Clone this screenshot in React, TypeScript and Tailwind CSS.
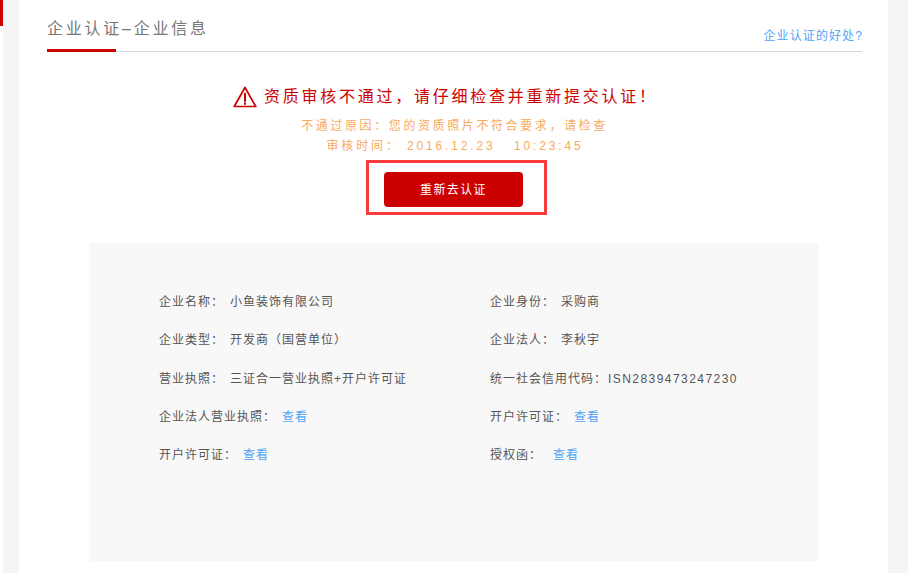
const rows = [
  [
    { label: '企业名称：', value: '小鱼装饰有限公司', gap: 'ml-[6px]' },
    { label: '企业身份：', value: '采购商', gap: 'ml-[6px]' },
  ],
  [
    { label: '企业类型：', value: '开发商（国营单位）', gap: 'ml-[6px]' },
    { label: '企业法人：', value: '李秋宇', gap: 'ml-[6px]' },
  ],
  [
    { label: '营业执照：', value: '三证合一营业执照+开户许可证', gap: 'ml-[6px]' },
    { label: '统一社会信用代码：', value: 'ISN2839473247230', gap: 'ml-[1px] tracking-[1.45px]' },
  ],
  [
    { label: '企业法人营业执照：', link: '查看', gap: 'ml-[6px]' },
    { label: '开户许可证：', link: '查看', gap: 'ml-[6px]' },
  ],
  [
    { label: '开户许可证：', link: '查看', gap: 'ml-[6px]' },
    { label: '授权函：', link: '查看', gap: 'ml-[11px]' },
  ],
]

function WarnIcon() {
  return (
    <svg className="w-[24px] h-[22px] shrink-0" viewBox="0 0 24 22" fill="none" stroke="#cc0000" strokeWidth="1.7" strokeLinejoin="round" strokeLinecap="round">
      <path d="M12 1.5L1.2 20.5h21.6L12 1.5z" />
      <path d="M12 7.5v7.5" strokeWidth="2" />
      <path d="M12 17.3v.6" strokeWidth="2" />
    </svg>
  )
}

export default function App() {
  return (
    <div className="h-[573px] overflow-hidden bg-[#f5f5f5] flex font-['Liberation_Sans','Noto_Sans_CJK_SC',sans-serif]">
      <div className="w-[3px] bg-white">
        <div className="h-[26px] bg-[#cc0000]" />
      </div>
      <div className="ml-[16px] w-[869px] bg-white">
        <div className="ml-[28px] mr-[26px] pt-[18px] relative border-b border-[#d8d8d8] h-[52px] flex justify-between items-start">
          <span className="text-[16px] leading-[22px] tracking-[2.75px] text-[#777]">企业认证–企业信息</span>
          <a className="mt-[10px] mr-[-1px] text-[12px] leading-[16px] tracking-[1.1px] text-[#4fa5f5]">企业认证的好处?</a>
          <div className="absolute left-0 bottom-[-1px] w-[69px] h-[3px] bg-[#cc0000]" />
        </div>

        <div className="flex flex-col items-center">
          <div className="mt-[34px] flex items-center h-[22px] ml-[-16px]">
            <WarnIcon />
            <span className="ml-[7px] text-[16px] leading-[22px] tracking-[2.75px] text-[#cc0000]">资质审核不通过，请仔细检查并重新提交认证！</span>
          </div>
          <p className="mt-[8px] ml-[2px] text-[12px] leading-[20px] tracking-[2.6px] text-[#f9a95c]">不通过原因：您的资质照片不符合要求，请检查</p>
          <p className="ml-[3px] text-[12px] leading-[20px] tracking-[2.85px] text-[#f9a95c] whitespace-pre">审核时间： 2016.12.23   10:23:45</p>
          <div className="mt-[4px] ml-[6px] w-[181px] h-[55px] border-[3px] border-[#f83c3c] flex items-start pl-[15px] pt-[9px]">
            <button className="w-[139px] h-[35px] rounded-[4px] bg-[#cc0000] text-white text-[12px] tracking-[1.4px]">重新去认证</button>
          </div>
        </div>

        <div className="mt-[28px] ml-[70px] w-[730px] h-[318px] bg-[#f8f8f8] pl-[70px] pt-[49px]">
          {rows.map((row, i) => (
            <div key={i} className="grid grid-cols-[331px_1fr] h-[38.3px] text-[12px] leading-[20px] tracking-[1px] text-[#555]">
              {row.map((c) => (
                <div key={c.label} className="flex">
                  <span>{c.label}</span>
                  {c.link ? (
                    <a className={`${c.gap} text-[#4fa5f5]`}>{c.link}</a>
                  ) : (
                    <span className={c.gap}>{c.value}</span>
                  )}
                </div>
              ))}
            </div>
          ))}
        </div>
      </div>
    </div>
  )
}
